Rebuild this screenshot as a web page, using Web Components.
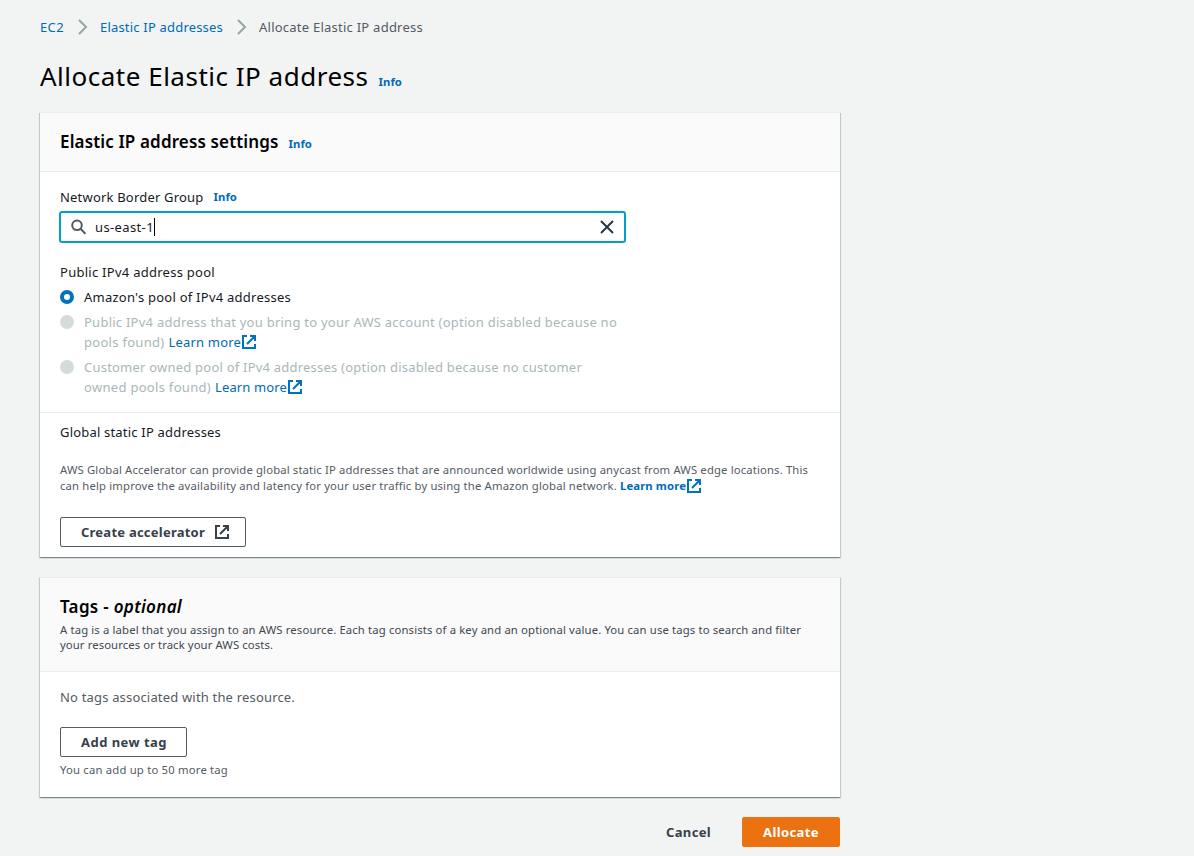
<!DOCTYPE html>
<html lang="en">
<head>
<meta charset="utf-8">
<title>Allocate Elastic IP address</title>
<style>
body{margin:0;background:#f2f3f3;font-family:"Noto Sans","Open Sans",sans-serif;font-size:13px;line-height:20px;color:#16191f}
</style>
</head>
<body>
<allocate-page></allocate-page>
<script>
const define = (name, html, setup) => {
  const t = document.createElement('template');
  t.innerHTML = html;
  customElements.define(name, class extends HTMLElement {
    connectedCallback() {
      if (this.shadowRoot) return;
      this.attachShadow({mode: 'open'}).append(t.content.cloneNode(true));
      if (setup) setup(this, this.shadowRoot);
    }
  });
};

/* One line of text whose tracking is set so that it spans the width in its "w" attribute. */
define('text-line', `<style>
:host{display:block;white-space:nowrap;flex:none}
:host([link]){color:#006bb8}
:host([small]){font-size:11.3px;line-height:16px}
:host([bold]){font-weight:700}
span{display:inline-block}
</style><span><slot></slot></span>`, (el, root) => {
  const w = parseFloat(el.getAttribute('w'));
  if (!w) return;
  const span = root.querySelector('span');
  const n = el.textContent.length;
  const ls = (w - span.getBoundingClientRect().width) / n;
  span.style.letterSpacing = ls.toFixed(3) + 'px';
});

define('info-link', `<style>
:host{display:block;flex:none;color:#006bb8;font-size:11.3px;font-weight:700;line-height:16px}
</style><text-line w="23.5">Info</text-line>`);

define('external-icon', `<style>
:host{display:block;flex:none;width:16px;height:16px}
svg{display:block}
</style><svg width="16" height="16" viewBox="0 0 16 16" fill="none" stroke="currentColor" stroke-width="2"><path d="M6 2H2v12h12v-4M9 2h5v5M6 10l7.5-7.5"/></svg>`);

define('crumb-chevron', `<style>
:host{display:block;flex:none;width:10px;height:16px}
svg{display:block}
</style><svg width="10" height="16" viewBox="0 0 10 16" fill="none" stroke="#95a5a6" stroke-width="2"><path d="M1 1l7 7-7 7"/></svg>`);

define('ui-card', `<style>
:host{display:block;box-sizing:border-box;background:#fff;border-top:1px solid #eaeded;box-shadow:0 1px 1px 0 rgba(0,28,36,.3),1px 1px 1px 0 rgba(0,28,36,.15),-1px 1px 1px 0 rgba(0,28,36,.15)}
header{background:#fafafa;border-bottom:1px solid #eaeded;padding:19px 20px}
</style><header><slot name="header"></slot></header><slot></slot>`);

define('search-field', `<style>
:host{display:flex;align-items:center;box-sizing:border-box;width:565px;height:30px;border:1px solid #00a1c9;border-radius:2px;box-shadow:0 0 0 1px #00a1c9;padding:0 9px 0 10px;background:#fff}
svg{display:block;flex:none}
.text{margin-left:8px}
.caret{width:1px;height:18px;background:#000}
.clear{margin-left:auto}
</style>
<svg width="16" height="16" viewBox="0 0 16 16" fill="none" stroke="#545b64" stroke-width="2"><circle cx="6" cy="6.3" r="4.8"/><path d="M9.5 9.8l4.9 4.9"/></svg>
<text-line class="text" w="59">us-east-1</text-line><div class="caret"></div>
<svg class="clear" width="16" height="16" viewBox="0 0 16 16" fill="none" stroke="#263340" stroke-width="1.9"><path d="M2 2l12 12M14 2L2 14"/></svg>`);

define('radio-option', `<style>
:host{display:flex;gap:10px;margin-bottom:5px;color:#16191f}
:host([disabled]){color:#aab7b8}
i{display:block;flex:none;box-sizing:border-box;width:14px;height:14px;margin-top:3px;border-radius:50%;border:4px solid #0073bb;background:#fff}
:host([disabled]) i{border:0;background:#d5dbdb}
</style><i></i><div><slot></slot></div>`);

define('ui-button', `<style>
:host{display:inline-flex;align-items:center;justify-content:flex-start;gap:9px;box-sizing:border-box;height:30px;border:1px solid #545b64;border-radius:2px;padding:0 20px;background:#fff;color:#37404b;font-weight:700;font-size:13px}
:host([plain]){border-color:transparent;background:none}
:host([primary]){border-color:#ec7211;background:#ec7211;color:#fff}
</style><slot></slot>`);

define('allocate-page', `<style>
:host{display:block;width:800px;margin-left:40px;padding-top:17px}
.row{display:flex;align-items:center}
.crumbs{height:20px;color:#545b64}
.crumbs crumb-chevron{margin:0 12px 0 14px}
h1,h2{margin:0;font-weight:400;display:flex;align-items:baseline;color:#000}
h1{font-size:26px;line-height:36px;margin-top:21px;height:36px;gap:10px}
h2{font-size:17px;line-height:20px;font-weight:600;gap:10px;height:20px}
ui-card.main{margin-top:18px;height:445px}
ui-card.tags{margin-top:20px;height:220px}
.body{padding:15px 20px 0}
.label{gap:10px;height:20px}
search-field{margin-top:5px}
.pool{margin:20px 0 5px}
.divider{border-top:1px solid #eaeded;margin-top:15px;padding:9px 20px 0}
.desc{margin-top:20px;color:#545b64}
.create{margin-top:23px;width:186px}
.tagdesc{color:#414750;margin-top:5px}
.tagdesc text-line{line-height:15px}
.muted{color:#545b64}
.add{margin-top:20px;width:127px}
.hint{margin-top:5px}
footer{display:flex;justify-content:flex-end;margin-top:20px;gap:10px}
em{font-style:italic}
.link{color:#0073bb}
</style>
<nav class="row crumbs">
<text-line link w="24">EC2</text-line><crumb-chevron></crumb-chevron>
<text-line link w="123">Elastic IP addresses</text-line><crumb-chevron></crumb-chevron>
<text-line w="164">Allocate Elastic IP address</text-line>
</nav>
<h1><text-line w="328.5">Allocate Elastic IP address</text-line><info-link></info-link></h1>
<ui-card class="main">
<h2 slot="header"><text-line w="218.5">Elastic IP address settings</text-line><info-link></info-link></h2>
<div class="body">
<div class="row label"><text-line w="143.5">Network Border Group</text-line><info-link></info-link></div>
<search-field></search-field>
<text-line class="pool" w="155">Public IPv4 address pool</text-line>
<radio-option><text-line w="207">Amazon's pool of IPv4 addresses</text-line></radio-option>
<radio-option disabled><text-line w="533">Public IPv4 address that you bring to your AWS account (option disabled because no</text-line>
<div class="row"><text-line w="80.5">pools found)</text-line><text-line link style="margin-left:4px" w="72.5">Learn more</text-line><external-icon class="link"></external-icon></div></radio-option>
<radio-option disabled><text-line w="498">Customer owned pool of IPv4 addresses (option disabled because no customer</text-line>
<div class="row"><text-line w="127">owned pools found)</text-line><text-line link style="margin-left:4px" w="72">Learn more</text-line><external-icon class="link"></external-icon></div></radio-option>
</div>
<div class="divider">
<text-line w="161">Global static IP addresses</text-line>
<div class="desc"><text-line small w="748">AWS Global Accelerator can provide global static IP addresses that are announced worldwide using anycast from AWS edge locations. This</text-line>
<div class="row"><text-line small w="557">can help improve the availability and latency for your user traffic by using the Amazon global network.</text-line><text-line small bold link style="margin-left:3px" w="66">Learn more</text-line><external-icon class="link"></external-icon></div></div>
<ui-button class="create"><text-line w="124">Create accelerator</text-line><external-icon></external-icon></ui-button>
</div>
</ui-card>
<ui-card class="tags">
<div slot="header" style="height:55px"><h2><text-line w="122">Tags - <em>optional</em></text-line></h2>
<div class="tagdesc"><text-line small w="741">A tag is a label that you assign to an AWS resource. Each tag consists of a key and an optional value. You can use tags to search and filter</text-line>
<text-line small w="213">your resources or track your AWS costs.</text-line></div></div>
<div class="body">
<text-line class="muted" w="235">No tags associated with the resource.</text-line>
<ui-button class="add"><text-line w="86">Add new tag</text-line></ui-button>
<text-line small class="muted hint" w="168">You can add up to 50 more tag</text-line>
</div>
</ui-card>
<footer><ui-button plain><text-line w="45">Cancel</text-line></ui-button><ui-button primary><text-line w="56">Allocate</text-line></ui-button></footer>`);
</script>
</body>
</html>
